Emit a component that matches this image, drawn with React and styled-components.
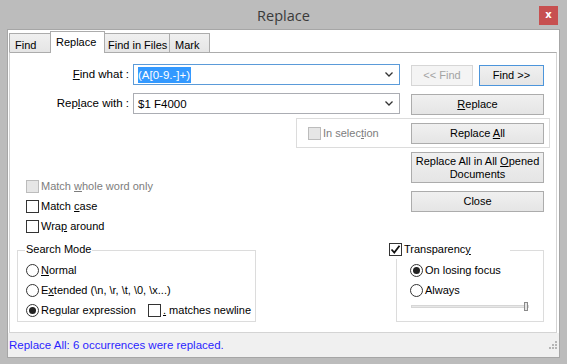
import React from 'react';
import styled, { createGlobalStyle } from 'styled-components';

const GlobalStyle = createGlobalStyle`
  html, body {
    margin: 0;
    padding: 0;
  }
  body {
    background: #bcbcbc;
    font-family: 'Liberation Sans', Arial, sans-serif;
    font-size: 11px;
    color: #000;
  }
`;

const Key = styled.span`
  text-decoration: underline;
  text-underline-offset: 1px;
`;

const Chevron = () => (
  <svg width="8" height="5" viewBox="0 0 8 5">
    <path d="M0.5 0.5 L4 4 L7.5 0.5" fill="none" stroke="#333" strokeWidth="1.3" />
  </svg>
);

const Grip = () => (
  <svg width="8" height="8" viewBox="0 0 8 8">
    <g fill="#b5b5b5">
      <rect x="6" y="0" width="2" height="2" />
      <rect x="3" y="3" width="2" height="2" />
      <rect x="6" y="3" width="2" height="2" />
      <rect x="0" y="6" width="2" height="2" />
      <rect x="3" y="6" width="2" height="2" />
      <rect x="6" y="6" width="2" height="2" />
    </g>
  </svg>
);

const Tick = () => (
  <svg width="11" height="11" viewBox="0 0 11 11">
    <path d="M1.5 5.5 L4.3 8.5 L9.5 1.8" fill="none" stroke="#111" strokeWidth="1.8" />
  </svg>
);

const CheckOption = ({ label, checked, disabled }) => (
  <Option $disabled={disabled}>
    <Box $disabled={disabled}>{checked && <Tick />}</Box>
    <span>{label}</span>
  </Option>
);

const RadioOption = ({ label, checked }) => (
  <Option>
    <Circle $checked={checked} />
    <span>{label}</span>
  </Option>
);

const App = () => (
  <Window>
    <GlobalStyle />
    <TitleBar>
      <span />
      <Title>Replace</Title>
      <CloseBox>x</CloseBox>
    </TitleBar>
    <Client>
      <TabStrip>
        <Tab $w={42}>Find</Tab>
        <Tab $w={55} $active>Replace</Tab>
        <Tab $w={66} $pad={3}>Find in Files</Tab>
        <Tab $w={41}>Mark</Tab>
      </TabStrip>
      <Panel>
        <FieldRow $top={11}>
          <Label>
            <Key>F</Key>ind what :
          </Label>
          <Combo $focused>
            <ComboText>
              <Selected>(A[0-9.-]+)</Selected>
            </ComboText>
            <Chevron />
          </Combo>
          <Button $w={62} $ml={11} $disabled>
            <span>&lt;&lt; Find</span>
          </Button>
          <Button $w={65} $ml={6} $default>
            <span>Find &gt;&gt;</span>
          </Button>
        </FieldRow>
        <FieldRow $top={7}>
          <Label>
            Rep<Key>l</Key>ace with :
          </Label>
          <Combo>
            <ComboText>$1 F4000</ComboText>
            <Chevron />
          </Combo>
          <Button $w={133} $ml={11}>
            <span>
              <Key>R</Key>eplace
            </span>
          </Button>
        </FieldRow>
        <SelectionGroup>
          <CheckOption
            disabled
            label={
              <>
                In selec<Key>t</Key>ion
              </>
            }
          />
          <Button $w={133} $ml="auto">
            <span>
              Replace <Key>A</Key>ll
            </span>
          </Button>
        </SelectionGroup>
        <Middle>
          <OptionColumn>
            <CheckOption
              disabled
              label={
                <>
                  Match <Key>w</Key>hole word only
                </>
              }
            />
            <CheckOption
              label={
                <>
                  Match <Key>c</Key>ase
                </>
              }
            />
            <CheckOption
              label={
                <>
                  Wra<Key>p</Key> around
                </>
              }
            />
          </OptionColumn>
          <ButtonColumn>
            <Button $w={133} $h={31}>
              <span>
                Replace All in All <Key>O</Key>pened
                <br />
                Documents
              </span>
            </Button>
            <Button $w={133}>
              <span>Close</span>
            </Button>
          </ButtonColumn>
        </Middle>
        <Bottom>
          <Group $w={239} $ml={7} $pl={8}>
            <Legend>Search Mode</Legend>
            <RadioOption
              label={
                <>
                  <Key>N</Key>ormal
                </>
              }
            />
            <RadioOption
              label={
                <>
                  E<Key>x</Key>tended (\n, \r, \t, \0, \x...)
                </>
              }
            />
            <InlineOptions>
              <RadioOption
                checked
                label={
                  <>
                    Re<Key>g</Key>ular expression
                  </>
                }
              />
              <CheckOption
                label={
                  <>
                    <Key>.</Key> matches newline
                  </>
                }
              />
            </InlineOptions>
          </Group>
          <Group $w={148} $ml={140} $pl={13}>
            <CheckLegend>
              <CheckOption
                checked
                label={
                  <>
                    Transparenc<Key>y</Key>
                  </>
                }
              />
            </CheckLegend>
            <RadioOption checked label="On losing focus" />
            <RadioOption label="Always" />
            <Slider>
              <Track />
              <Thumb />
            </Slider>
          </Group>
        </Bottom>
      </Panel>
      <StatusBar>
        <StatusText>Replace All: 6 occurrences were replaced.</StatusText>
        <Grip />
      </StatusBar>
    </Client>
  </Window>
);

export default App;

const Window = styled.div`
  width: 567px;
  height: 364px;
  box-sizing: border-box;
  padding: 0 7px 6px 7px;
  display: flex;
  flex-direction: column;
  background: #bcbcbc;
`;

const TitleBar = styled.div`
  height: 29px;
  flex: none;
  display: grid;
  grid-template-columns: 1fr auto 1fr;
  align-items: center;
`;

const Title = styled.span`
  font-family: 'Open Sans', 'Noto Sans', sans-serif;
  font-size: 14.5px;
  color: #3a3a3a;
  padding-top: 2px;
`;

const CloseBox = styled.div`
  justify-self: end;
  align-self: start;
  margin: 6px 2px 0 0;
  width: 19px;
  height: 19px;
  background: #c75050;
  color: #fff;
  font-family: 'DejaVu Sans', sans-serif;
  font-weight: bold;
  font-size: 10px;
  display: flex;
  align-items: center;
  justify-content: center;
  line-height: 1;
  padding-bottom: 1px;
  box-sizing: border-box;
`;

const Client = styled.div`
  flex: 1;
  display: flex;
  flex-direction: column;
  background: #fff;
  border: 1px solid #a6a6a6;
`;

const TabStrip = styled.div`
  height: 22px;
  flex: none;
  display: flex;
  align-items: flex-end;
  padding-left: 1px;
  position: relative;
  z-index: 1;
`;

const Tab = styled.div`
  width: ${(p) => p.$w}px;
  height: ${(p) => (p.$active ? 22 : 19)}px;
  box-sizing: border-box;
  margin-left: -1px;
  margin-bottom: ${(p) => (p.$active ? -1 : 0)}px;
  &:first-child {
    margin-left: 0;
  }
  padding: ${(p) => (p.$active ? 4 : 5)}px 0 0 ${(p) => p.$pad ?? 5}px;
  border: 1px solid #acacac;
  border-bottom: none;
  background: ${(p) => (p.$active ? '#fff' : 'linear-gradient(#f0f0f0, #e5e5e5)')};
  font-size: 11px;
  white-space: nowrap;
  position: relative;
  z-index: ${(p) => (p.$active ? 2 : 0)};
`;

const Panel = styled.div`
  height: 281px;
  box-sizing: border-box;
  margin: 0 2px 0 1px;
  border: 1px solid #d4d4d4;
  border-top-color: #acacac;
  display: flex;
  flex-direction: column;
`;

const FieldRow = styled.div`
  display: flex;
  align-items: flex-start;
  height: 22px;
  margin-top: ${(p) => p.$top}px;
`;

const Label = styled.div`
  width: 119px;
  margin-right: 4px;
  text-align: right;
  font-size: 11.5px;
  line-height: 21px;
`;

const Combo = styled.div`
  width: 267px;
  height: 21px;
  box-sizing: border-box;
  border: 1px solid ${(p) => (p.$focused ? '#5b9bd9' : '#abadb3')};
  display: flex;
  align-items: center;
  padding: 0 6px 0 4px;
  background: #fff;
`;

const ComboText = styled.div`
  flex: 1;
  font-size: 11.5px;
`;

const Selected = styled.span`
  background: #3399ff;
  color: #fff;
  padding: 2px 1px 2px 0;
`;

const Button = styled.div`
  width: ${(p) => p.$w}px;
  height: ${(p) => p.$h ?? 21}px;
  margin-left: ${(p) => (p.$ml === 'auto' ? 'auto' : `${p.$ml ?? 0}px`)};
  margin-top: 1px;
  box-sizing: border-box;
  border: 1px solid ${(p) => (p.$disabled ? '#d6d6d6' : p.$default ? '#4c95db' : '#acacac')};
  background: ${(p) => (p.$disabled ? '#f4f4f4' : 'linear-gradient(#f0f0f0, #e5e5e5)')};
  color: ${(p) => (p.$disabled ? '#a3a3a3' : '#000')};
  display: flex;
  align-items: center;
  justify-content: center;
  text-align: center;
  font-size: 11px;
  line-height: 13px;
`;

const SelectionGroup = styled.div`
  width: 254px;
  height: 30px;
  box-sizing: border-box;
  margin: 3px 0 0 286px;
  border: 1px solid #dcdcdc;
  display: flex;
  align-items: center;
  padding: 0 5px 0 11px;
  & > ${Button} {
    margin-top: 0;
  }
`;

const Option = styled.div`
  display: flex;
  align-items: center;
  gap: 2px;
  height: 20px;
  font-size: 11px;
  white-space: nowrap;
  color: ${(p) => (p.$disabled ? '#7d7d7d' : '#000')};
`;

const Box = styled.div`
  width: 13px;
  height: 13px;
  box-sizing: border-box;
  border: 1px solid ${(p) => (p.$disabled ? '#bcbcbc' : '#333')};
  background: ${(p) => (p.$disabled ? '#e6e6e6' : '#fff')};
  display: flex;
  align-items: center;
  justify-content: center;
`;

const Circle = styled.div`
  width: 13px;
  height: 13px;
  box-sizing: border-box;
  border-radius: 50%;
  border: 1px solid #333;
  background: #fff;
  display: flex;
  align-items: center;
  justify-content: center;
  &::after {
    content: '';
    width: 7px;
    height: 7px;
    border-radius: 50%;
    background: #222;
    display: ${(p) => (p.$checked ? 'block' : 'none')};
  }
`;

const Middle = styled.div`
  display: flex;
  height: 88px;
`;

const OptionColumn = styled.div`
  display: flex;
  flex-direction: column;
  padding: 28px 0 0 16px;
`;

const ButtonColumn = styled.div`
  display: flex;
  flex-direction: column;
  gap: 7px;
  margin: 0 12px 0 auto;
  padding-top: 3px;
`;

const Bottom = styled.div`
  display: flex;
  margin-top: 14px;
`;

const Group = styled.div`
  position: relative;
  width: ${(p) => p.$w}px;
  height: 72px;
  box-sizing: border-box;
  margin-left: ${(p) => p.$ml}px;
  border: 1px solid #dcdcdc;
  padding: 9px 0 0 ${(p) => p.$pl}px;
`;

const Legend = styled.div`
  position: absolute;
  top: -8px;
  left: 7px;
  padding: 0 1px;
  background: #fff;
  font-size: 11px;
`;

const CheckLegend = styled.div`
  position: absolute;
  top: -12px;
  left: -8px;
  width: 121px;
  background: #fff;
`;

const InlineOptions = styled.div`
  display: grid;
  grid-template-columns: 122px auto;
`;

const Slider = styled.div`
  position: relative;
  width: 118px;
  height: 12px;
  margin-left: 1px;
  display: flex;
  align-items: center;
`;

const Track = styled.div`
  width: 100%;
  height: 3px;
  box-sizing: border-box;
  background: #e7e7e7;
  border: 1px solid #d6d6d6;
`;

const Thumb = styled.div`
  position: absolute;
  right: 1px;
  top: 2px;
  width: 4px;
  height: 9px;
  box-sizing: border-box;
  background: #e6e6e6;
  border: 1px solid #8a8a8a;
`;

const StatusBar = styled.div`
  flex: 1;
  display: flex;
  align-items: center;
  justify-content: space-between;
  background: #f0f0f0;
  padding: 0 2px 0 1px;
`;

const StatusText = styled.span`
  color: #2b1fff;
  font-size: 11.5px;
`;
